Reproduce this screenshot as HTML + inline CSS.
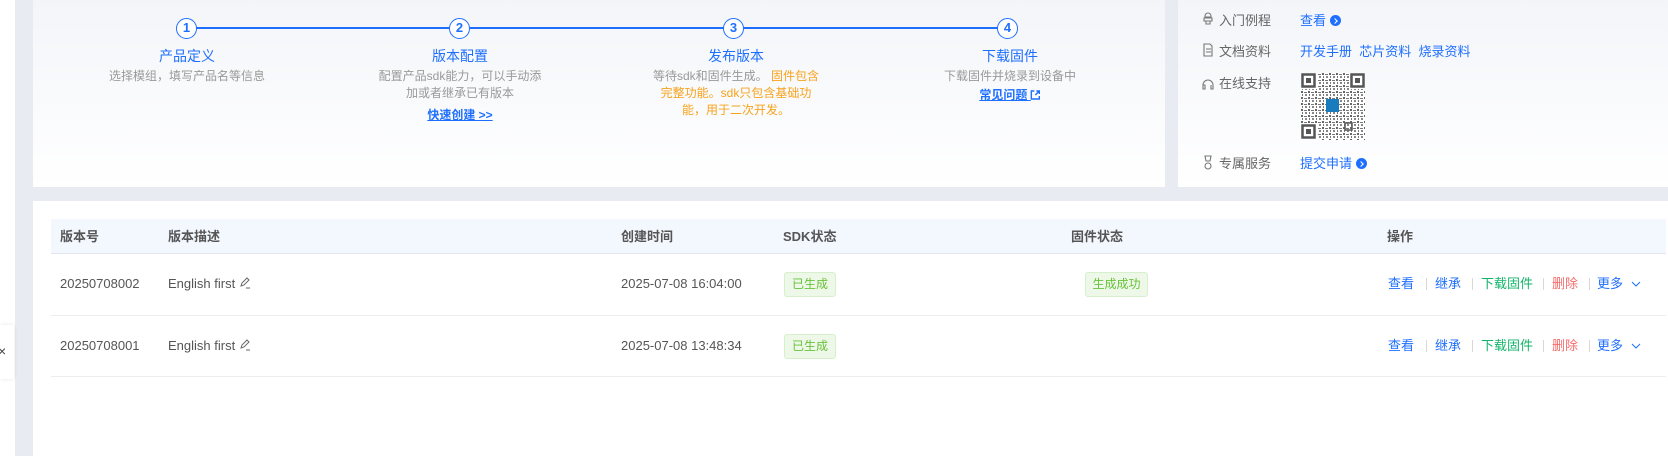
<!DOCTYPE html>
<html><head><meta charset="utf-8"><style>
*{margin:0;padding:0;box-sizing:border-box}
body{width:1668px;height:456px;overflow:hidden;position:relative;background:#e8ebf2;font-family:"Liberation Sans","Noto Sans CJK SC",sans-serif;color:#555}
.abs{position:absolute}
.card{position:absolute;background:linear-gradient(#f3f5f9,#fff)}
.c{position:absolute;transform:translateX(-50%);text-align:center;white-space:nowrap}
.circ{position:absolute;width:21px;height:21px;border:1.5px solid #1f6fff;border-radius:50%;background:#fff;color:#1f6fff;font-weight:bold;font-size:13px;line-height:18px;text-align:center}
.t{font-size:14px;color:#1f6fff}
.d{font-size:12px;color:#999;line-height:17px}
.o{color:#f7a21b}
.lk{font-size:12px;font-weight:bold;color:#1f6fff;text-decoration:underline}
.lab{position:absolute;font-size:13px;color:#666}
.blue{color:#1f6fff}
.arr{display:inline-block;width:11px;height:11px;border-radius:50%;background:#1f6fff;vertical-align:-1px;margin-left:4px;position:relative}
.arr:after{content:"";position:absolute;left:2.5px;top:3.5px;width:3px;height:3px;border-top:1.5px solid #fff;border-right:1.5px solid #fff;transform:rotate(45deg)}
.th{position:absolute;font-size:13px;font-weight:bold;color:#555;top:226px}
.td{position:absolute;font-size:13px;color:#555}
.badge{position:absolute;height:25px;border:1px solid #d8efcc;background:#eef8e8;color:#67c23a;font-size:12px;line-height:23px;text-align:center;border-radius:3px}
.act{position:absolute;font-size:13px}
.sep{position:absolute;width:1px;height:12px;background:#d8d8d8}
</style></head><body>
<div class="abs" style="left:0;top:0;width:15px;height:456px;background:#fff"></div>
<div class="abs" style="left:0;top:325px;width:14px;height:54px;background:#fff;box-shadow:0 0 4px rgba(0,0,0,.1)"></div>
<div class="abs" style="left:-2px;top:343px;font-size:14px;color:#444">×</div>

<div class="card" style="left:33px;top:0;width:1132px;height:187px"></div>
<div class="abs" style="left:196px;top:27px;width:802px;height:2px;background:#1f6fff"></div>
<div class="circ" style="left:176px;top:18px">1</div>
<div class="circ" style="left:449px;top:18px">2</div>
<div class="circ" style="left:723px;top:18px">3</div>
<div class="circ" style="left:997px;top:18px">4</div>

<div class="c t" style="left:187px;top:46px">产品定义</div>
<div class="c d" style="left:187px;top:68px">选择模组，填写产品名等信息</div>
<div class="c t" style="left:460px;top:46px">版本配置</div>
<div class="c d" style="left:460px;top:68px">配置产品sdk能力，可以手动添<br>加或者继承已有版本</div>
<div class="c lk" style="left:460px;top:106px">快速创建 &gt;&gt;</div>
<div class="c t" style="left:736px;top:46px">发布版本</div>
<div class="c d" style="left:736px;top:68px">等待sdk和固件生成。 <span class="o">固件包含</span><br><span class="o">完整功能。sdk只包含基础功</span><br><span class="o">能，用于二次开发。</span></div>
<div class="c t" style="left:1010px;top:46px">下载固件</div>
<div class="c d" style="left:1010px;top:68px">下载固件并烧录到设备中</div>
<div class="c lk" style="left:1010px;top:86px">常见问题 <svg width="10" height="10" viewBox="0 0 10 10" fill="none" stroke="#1f6fff" stroke-width="1.4" style="vertical-align:-1px"><path d="M4 1H1v8h8V6M6 1h3v3M9 1L5 5"/></svg></div>

<div class="card" style="left:1178px;top:0;width:490px;height:187px"></div>
<svg class="abs" style="left:1202px;top:12px" width="12" height="160" viewBox="0 0 12 160" fill="none" stroke="#777" stroke-width="1.1">
<path d="M3 4a3 3 0 0 1 6 0v1H3zM2 6h8v3H2zM4 9v3h4V9"/>
<path d="M2 32h6l2 2v10H2zM4 37h5M4 40h5"/>
<path d="M1 73a5 5 0 0 1 10 0v3M1 73v4h2v-4zM11 73v4h-2v-4"/>
<path d="M3 144h6l-1 5H4zM6 151a3 3 0 1 1 0 6a3 3 0 0 1 0-6"/>
</svg>
<div class="lab" style="left:1219px;top:10px">入门例程</div>
<div class="lab" style="left:1219px;top:41px">文档资料</div>
<div class="lab" style="left:1219px;top:73px">在线支持</div>
<div class="lab" style="left:1219px;top:153px">专属服务</div>
<div class="lab blue" style="left:1300px;top:10px">查看<span class="arr"></span></div>
<div class="lab blue" style="left:1300px;top:41px">开发手册&nbsp;&nbsp;芯片资料&nbsp;&nbsp;烧录资料</div>
<div class="lab blue" style="left:1300px;top:153px">提交申请<span class="arr"></span></div>
<svg class="abs" style="left:1301px;top:73px" width="64" height="67" viewBox="0 0 64 67">
<defs><pattern id="p" width="7" height="6" patternUnits="userSpaceOnUse"><rect width="7" height="6" fill="#fff"/><rect x="0" y="0" width="2" height="2" fill="#666"/><rect x="3" y="1" width="3" height="1" fill="#777"/><rect x="1" y="3" width="1" height="2" fill="#777"/><rect x="4" y="3" width="2" height="2" fill="#888"/></pattern></defs>
<rect width="64" height="67" fill="url(#p)"/>
<g fill="#fff"><rect x="0" y="0" width="16" height="16"/><rect x="48" y="0" width="16" height="16"/><rect x="0" y="51" width="16" height="16"/></g>
<g fill="none" stroke="#555" stroke-width="2.5"><rect x="1.5" y="1.5" width="12" height="12"/><rect x="50.5" y="1.5" width="12" height="12"/><rect x="1.5" y="52.5" width="12" height="12"/></g>
<g fill="#555"><rect x="5" y="5" width="5" height="5"/><rect x="54" y="5" width="5" height="5"/><rect x="5" y="56" width="5" height="5"/></g>
<rect x="44" y="50" width="7" height="7" fill="none" stroke="#555" stroke-width="1.5"/>
<rect x="25" y="26" width="13" height="13" fill="#1a7bbd"/>
</svg>

<div class="abs" style="left:33px;top:201px;width:1635px;height:255px;background:#fff"></div>
<div class="abs" style="left:51px;top:219px;width:1615px;height:35px;background:#f3f7fe;border-bottom:1px solid #e3e5ea"></div>
<div class="abs" style="left:51px;top:315px;width:1615px;height:1px;background:#ebedf1"></div>
<div class="abs" style="left:51px;top:376px;width:1615px;height:1px;background:#ebedf1"></div>
<div class="th" style="left:60px">版本号</div>
<div class="th" style="left:168px">版本描述</div>
<div class="th" style="left:621px">创建时间</div>
<div class="th" style="left:783px">SDK状态</div>
<div class="th" style="left:1071px">固件状态</div>
<div class="th" style="left:1387px">操作</div>

<div class="td" style="left:60px;top:276px">20250708002</div>
<div class="td" style="left:168px;top:276px">English first <svg width="12" height="12" viewBox="0 0 12 12" style="vertical-align:-1px" fill="none" stroke="#666"><path d="M2 9l1-3 5-5 2 2-5 5zM7 11h4"/></svg></div>
<div class="td" style="left:621px;top:276px">2025-07-08 16:04:00</div>
<div class="badge" style="left:784px;top:272px;width:52px">已生成</div>
<div class="badge" style="left:1085px;top:272px;width:63px">生成成功</div>

<div class="td" style="left:60px;top:338px">20250708001</div>
<div class="td" style="left:168px;top:338px">English first <svg width="12" height="12" viewBox="0 0 12 12" style="vertical-align:-1px" fill="none" stroke="#666"><path d="M2 9l1-3 5-5 2 2-5 5zM7 11h4"/></svg></div>
<div class="td" style="left:621px;top:338px">2025-07-08 13:48:34</div>
<div class="badge" style="left:784px;top:334px;width:52px">已生成</div>

<div class="act blue" style="left:1388px;top:273px">查看</div><div class="sep" style="left:1426px;top:278px"></div>
<div class="act blue" style="left:1435px;top:273px">继承</div><div class="sep" style="left:1472px;top:278px"></div>
<div class="act" style="left:1481px;top:273px;color:#13b36a">下载固件</div><div class="sep" style="left:1543px;top:278px"></div>
<div class="act" style="left:1552px;top:273px;color:#f56c6c">删除</div><div class="sep" style="left:1589px;top:278px"></div>
<div class="act blue" style="left:1597px;top:273px">更多 <svg width="10" height="8" viewBox="0 0 10 8" style="margin-left:4px" fill="none" stroke="#1f6fff"><path d="M1 2l4 4 4-4"/></svg></div>

<div class="act blue" style="left:1388px;top:335px">查看</div><div class="sep" style="left:1426px;top:340px"></div>
<div class="act blue" style="left:1435px;top:335px">继承</div><div class="sep" style="left:1472px;top:340px"></div>
<div class="act" style="left:1481px;top:335px;color:#13b36a">下载固件</div><div class="sep" style="left:1543px;top:340px"></div>
<div class="act" style="left:1552px;top:335px;color:#f56c6c">删除</div><div class="sep" style="left:1589px;top:340px"></div>
<div class="act blue" style="left:1597px;top:335px">更多 <svg width="10" height="8" viewBox="0 0 10 8" style="margin-left:4px" fill="none" stroke="#1f6fff"><path d="M1 2l4 4 4-4"/></svg></div>
</body></html>
